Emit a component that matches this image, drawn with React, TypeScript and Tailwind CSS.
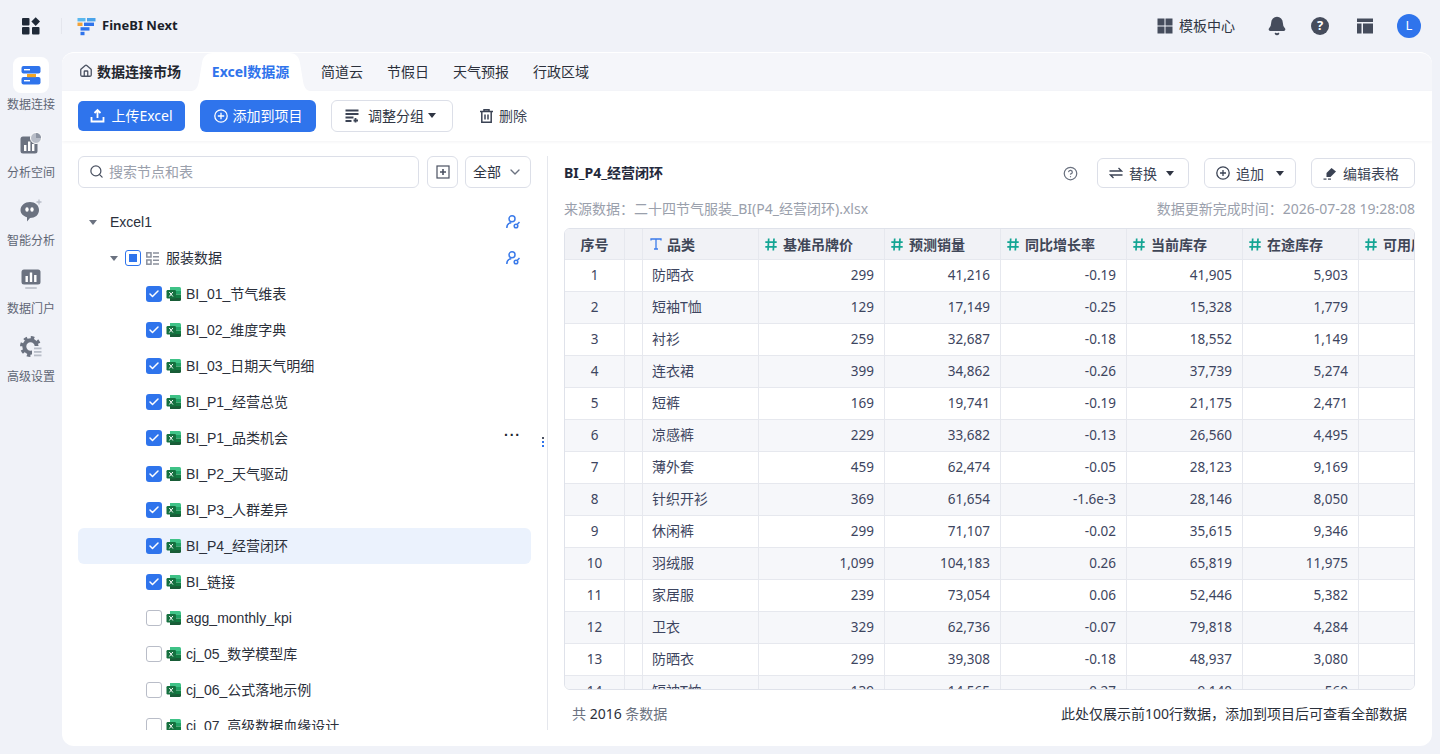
import { Bell, Check, ChevronDown, CircleHelp, House, Search } from "lucide-react";

const FONT = "font-['Noto_Sans','Noto_Sans_CJK_SC',sans-serif]";
const TREE_FONT = "font-['Liberation_Sans','Noto_Sans_CJK_SC',sans-serif]";

const TABS = ["简道云", "节假日", "天气预报", "行政区域"];

const TABLES = [
  { name: "BI_01_节气维表", checked: true },
  { name: "BI_02_维度字典", checked: true },
  { name: "BI_03_日期天气明细", checked: true },
  { name: "BI_P1_经营总览", checked: true },
  { name: "BI_P1_品类机会", checked: true, more: true },
  { name: "BI_P2_天气驱动", checked: true },
  { name: "BI_P3_人群差异", checked: true },
  { name: "BI_P4_经营闭环", checked: true, active: true },
  { name: "BI_链接", checked: true },
  { name: "agg_monthly_kpi", checked: false },
  { name: "cj_05_数学模型库", checked: false },
  { name: "cj_06_公式落地示例", checked: false },
  { name: "cj_07_高级数据血缘设计", checked: false },
];

const ROWS = [
  ["1", "防晒衣", "299", "41,216", "-0.19", "41,905", "5,903"],
  ["2", "短袖T恤", "129", "17,149", "-0.25", "15,328", "1,779"],
  ["3", "衬衫", "259", "32,687", "-0.18", "18,552", "1,149"],
  ["4", "连衣裙", "399", "34,862", "-0.26", "37,739", "5,274"],
  ["5", "短裤", "169", "19,741", "-0.19", "21,175", "2,471"],
  ["6", "凉感裤", "229", "33,682", "-0.13", "26,560", "4,495"],
  ["7", "薄外套", "459", "62,474", "-0.05", "28,123", "9,169"],
  ["8", "针织开衫", "369", "61,654", "-1.6e-3", "28,146", "8,050"],
  ["9", "休闲裤", "299", "71,107", "-0.02", "35,615", "9,346"],
  ["10", "羽绒服", "1,099", "104,183", "0.26", "65,819", "11,975"],
  ["11", "家居服", "239", "73,054", "0.06", "52,446", "5,382"],
  ["12", "卫衣", "329", "62,736", "-0.07", "79,818", "4,284"],
  ["13", "防晒衣", "299", "39,308", "-0.18", "48,937", "3,080"],
  ["14", "短袖T恤", "139", "14,565", "-0.27", "9,140", "560"],
];

const NUM_HEADERS = [
  { label: "基准吊牌价", w: "w-[126px]" },
  { label: "预测销量", w: "w-[116px]" },
  { label: "同比增长率", w: "w-[126px]" },
  { label: "当前库存", w: "w-[116px]" },
  { label: "在途库存", w: "w-[116px]" },
];

function AppsIcon() {
  return (
    <svg width="18" height="18" viewBox="0 0 18 18" fill="#1f2937">
      <rect x="0" y="1" width="7.5" height="7.5" rx="1" />
      <rect x="0" y="10" width="7.5" height="7.5" rx="1" />
      <rect x="10" y="10" width="7.5" height="7.5" rx="1" />
      <path d="M13.7 0.3 18 4.6l-4.3 4.3-4.3-4.3z" />
    </svg>
  );
}

function Logo() {
  return (
    <svg width="19" height="19" viewBox="0 0 19 19">
      <rect x="0.5" y="1" width="8" height="3.4" fill="#5bb8ee" />
      <rect x="10" y="1" width="8.5" height="3.4" fill="#4aa3ea" />
      <rect x="0.5" y="5.6" width="5" height="3.4" fill="#f2a33a" />
      <rect x="7" y="5.6" width="10" height="3.4" fill="#2f74ec" />
      <rect x="3.5" y="10.2" width="9" height="3.4" fill="#2f74ec" />
      <rect x="3.5" y="14.8" width="4" height="3.4" fill="#2f74ec" />
    </svg>
  );
}

function ConnectIcon() {
  return (
    <svg width="20" height="20" viewBox="0 0 20 20">
      <rect x="0.5" y="1" width="19" height="7.5" rx="2" fill="#2f74ec" />
      <rect x="0.5" y="12" width="19" height="7.5" rx="2" fill="#2f74ec" />
      <rect x="3" y="4" width="6" height="1.4" fill="#fff" />
      <rect x="3" y="15" width="6" height="1.4" fill="#fff" />
      <path d="M6 9h9v3.2H6z" fill="#f5a623" />
    </svg>
  );
}

function SpaceIcon() {
  return (
    <svg width="22" height="22" viewBox="0 0 22 22">
      <rect x="0.5" y="4.5" width="17" height="17" rx="2.5" fill="#6b7280" />
      <rect x="4" y="13" width="2.4" height="6" fill="#fff" />
      <rect x="8" y="9.5" width="2.4" height="9.5" fill="#fff" />
      <rect x="12" y="12" width="2.4" height="7" fill="#fff" />
      <circle cx="16" cy="6" r="5.5" fill="#b8bdc8" stroke="#fff" />
      <path d="M16 6V1a5 5 0 0 1 5 5z" fill="#8d94a2" />
    </svg>
  );
}

function ChatIcon() {
  return (
    <svg width="24" height="24" viewBox="0 0 24 24">
      <path d="M11 3c5 0 9 3 9 8s-4 8-9 8l-3 3.5v-4.2C4 17 1.5 14.5 1.5 11 1.5 6.5 6 3 11 3z" fill="#6b7280" />
      <ellipse cx="8" cy="10.5" rx="1.7" ry="2.3" fill="#fff" />
      <ellipse cx="13" cy="10.5" rx="1.7" ry="2.3" fill="#fff" />
      <path d="M20 0.5v5M17.5 3h5" stroke="#b8bdc8" strokeWidth="1.3" />
    </svg>
  );
}

function PortalIcon() {
  return (
    <svg width="20" height="21" viewBox="0 0 20 21">
      <rect x="0.5" y="0.5" width="19" height="15" rx="2.5" fill="#6b7280" />
      <rect x="4.5" y="7" width="2.4" height="6" fill="#fff" />
      <rect x="8.8" y="3.5" width="2.4" height="9.5" fill="#fff" />
      <rect x="13.1" y="6" width="2.4" height="7" fill="#fff" />
      <rect x="4" y="18" width="12" height="2" rx="1" fill="#c3c7d0" />
    </svg>
  );
}

function GearIcon() {
  return (
    <svg width="22" height="22" viewBox="0 0 22 22" fill="none">
      <circle cx="10.5" cy="10.5" r="6.2" stroke="#6b7280" strokeWidth="4" />
      <circle cx="10.5" cy="10.5" r="9" stroke="#6b7280" strokeWidth="3" strokeDasharray="3.5 3.57" />
      <rect x="12" y="10" width="10" height="12" fill="#f0f2f8" />
      <rect x="14" y="11.5" width="7.5" height="1.8" fill="#b8bdc8" />
      <rect x="14" y="15" width="7.5" height="1.8" fill="#b8bdc8" />
      <rect x="14" y="18.5" width="7.5" height="1.8" fill="#b8bdc8" />
    </svg>
  );
}

function ExcelIcon() {
  return (
    <svg width="16" height="16" viewBox="0 0 16 16" className="shrink-0">
      <path d="M4 1h9.5A1.5 1.5 0 0 1 15 2.5V5H4z" fill="#3fc287" />
      <rect x="4" y="5" width="11" height="3.5" fill="#21a366" />
      <rect x="4" y="8.5" width="11" height="3.5" fill="#107c41" />
      <path d="M4 12h11v1.5a1.5 1.5 0 0 1-1.5 1.5H4z" fill="#185c37" />
      <rect x="0.5" y="4" width="9.5" height="8.5" rx="1.2" fill="#15703f" />
      <path d="M3.3 6l3.6 4.5M6.9 6l-3.6 4.5" stroke="#fff" strokeWidth="1" />
    </svg>
  );
}

function HashIcon() {
  return (
    <svg width="12" height="13" viewBox="0 0 12 13" className="shrink-0" fill="none" stroke="#14a594" strokeWidth="1.7">
      <path d="M3.7 0.5 3 12.5M9 0.5l-.7 12M0.3 4.2h11.400M0.3 8.800h11.400" />
    </svg>
  );
}

function TextTypeIcon() {
  return (
    <svg width="12" height="12" viewBox="0 0 12 12" className="shrink-0" fill="none" stroke="#3b7bea" strokeWidth="1.3">
      <path d="M1 2.5V1h10v1.5M6 1v10M4 11h4" />
    </svg>
  );
}

function ShareIcon() {
  return (
    <svg width="14" height="14" viewBox="0 0 14 14" fill="none" stroke="#3b7bea" strokeWidth="1.5">
      <circle cx="6" cy="3.8" r="3" />
      <path d="M0.8 13c0-3 2-5 4.500-5.200" />
      <circle cx="10" cy="11" r="1.8" />
      <path d="M11.200 9.600 13.500 7" />
    </svg>
  );
}

function Caret({ className }: { className: string }) {
  return (
    <span className={`inline-block w-0 h-0 border-x-[4.5px] border-x-transparent border-t-[5px] ${className}`} />
  );
}

function NavItem({ icon, label, active }: { icon: React.ReactNode; label: string; active?: boolean }) {
  return (
    <div className="h-[68px] flex flex-col items-center">
      <div className={`w-9 h-9 rounded-lg flex items-center justify-center ${active ? "bg-white" : ""}`}>{icon}</div>
      <span className="mt-[2px] text-xs leading-5 text-[#5f6675]">{label}</span>
    </div>
  );
}

function Checkbox({ checked }: { checked: boolean }) {
  if (checked) {
    return (
      <span className="w-4 h-4 shrink-0 rounded-[3px] bg-[#2f74ec] flex items-center justify-center">
        <Check size={12} strokeWidth={3} color="#fff" />
      </span>
    );
  }
  return <span className="w-4 h-4 shrink-0 rounded-[3px] border border-[#b9bdc8] bg-white" />;
}

function OutlineButton({ children, className }: { children: React.ReactNode; className: string }) {
  return (
    <button className={`h-[30px] rounded-md border border-[#dcdfe8] bg-white flex items-center pl-[11px] gap-[6px] text-[14px] text-[#3b4354] ${className}`}>
      {children}
    </button>
  );
}

export default function App() {
  return (
    <div className={`h-screen w-full overflow-hidden bg-[#f0f2f8] flex flex-col ${FONT}`}>
      <header className="h-[52px] shrink-0 flex items-center pl-[22px] pr-[19px]">
        <AppsIcon />
        <div className="ml-[21px] w-px h-4 bg-[#e4e6ed]" />
        <div className="ml-[15px]">
          <Logo />
        </div>
        <span className="ml-[6px] text-[13px] font-bold text-[#1b1f2a]">FineBI Next</span>
        <div className="ml-auto flex items-center">
          <svg width="16" height="16" viewBox="0 0 16 16" fill="#454c5c">
            <rect x="0.5" y="0.5" width="7" height="7" />
            <rect x="8.5" y="0.5" width="7" height="7" />
            <rect x="0.5" y="8.5" width="7" height="7" />
            <rect x="8.5" y="8.5" width="7" height="7" />
          </svg>
          <span className="ml-[6px] pb-[2px] text-[14px] text-[#2f3543]">模板中心</span>
          <Bell size={20} fill="#454c5c" color="#454c5c" className="ml-[32px]" />
          <span className="ml-[24px] w-[18px] h-[18px] rounded-full bg-[#454c5c] text-white text-[13px] font-bold flex items-center justify-center">?</span>
          <svg width="16" height="16" viewBox="0 0 16 16" fill="#454c5c" className="ml-[28px]">
            <rect x="0" y="0.5" width="16" height="3.5" />
            <rect x="0" y="5.5" width="4.5" height="10" />
            <rect x="6" y="5.5" width="10" height="10" />
          </svg>
          <span className="ml-[24px] w-6 h-6 rounded-full bg-[#2f74ec] text-white text-[13px] flex items-center justify-center">L</span>
        </div>
      </header>

      <div className="flex-1 min-h-0 flex">
        <nav className="w-[62px] shrink-0 pt-[5px]">
          <NavItem icon={<ConnectIcon />} label="数据连接" active />
          <NavItem icon={<SpaceIcon />} label="分析空间" />
          <NavItem icon={<ChatIcon />} label="智能分析" />
          <NavItem icon={<PortalIcon />} label="数据门户" />
          <NavItem icon={<GearIcon />} label="高级设置" />
        </nav>

        <main className="w-[1370px] h-[694px] rounded-xl overflow-hidden bg-white border-t border-t-white flex flex-col">
          <div className="h-[38px] shrink-0 bg-[#f5f6fa] flex items-end text-[14px]">
            <div className="h-full ml-[17px] pb-[2px] flex items-center gap-[4px] font-bold text-[#23272f]">
              <House size={14} strokeWidth={2.2} color="#4b5262" />
              <span>数据连接市场</span>
            </div>
            <div className="h-full w-[120px] ml-[10px] pb-[2px] pr-px bg-white flex items-center justify-center font-bold text-[#2f74ec] [clip-path:path('M0_38C5_38_7_34_8_28L11_10C12_3_16_0_22_0H98C104_0_108_3_109_10L112_28C113_34_115_38_120_38Z')]">Excel数据源</div>
            <div className="h-full pb-[2px] flex items-center gap-6 ml-[10px] text-[#2b303b]">
              {TABS.map((t) => (
                <span key={t}>{t}</span>
              ))}
            </div>
          </div>

          <div className="h-[50px] shrink-0 flex items-center pl-4 shadow-[0_1px_3px_rgba(30,40,70,0.06)]">
            <button className="h-[30px] w-[107px] pb-px rounded-[5px] bg-[#2f74ec] text-white text-[14px] flex items-center justify-center gap-[6px]">
              <svg width="15" height="15" viewBox="0 0 15 15" fill="none" stroke="#fff" strokeWidth="1.8">
                <path d="M7.5 10V2M4.5 5l3-3 3 3" />
                <path d="M1.5 9v4.5h12V9" />
              </svg>
              上传Excel
            </button>
            <button className="ml-[15px] h-8 w-[116px] pb-px rounded-md bg-[#2f74ec] text-white text-[14px] flex items-center justify-center gap-[5px]">
              <svg width="14" height="14" viewBox="0 0 14 14" fill="none" stroke="#fff" strokeWidth="1.3">
                <circle cx="7" cy="7" r="6.2" />
                <path d="M7 3.8v6.4M3.8 7h6.4" />
              </svg>
              添加到项目
            </button>
            <button className="ml-[15px] h-8 w-[122px] pl-[13px] pb-px rounded-md border border-[#dcdfe8] text-[14px] text-[#2f3543] flex items-center">
              <svg width="14" height="14" viewBox="0 0 14 14" fill="none" stroke="#3b4354" strokeWidth="1.8" className="mr-[9px]">
                <path d="M0.5 1.500h13M0.5 5h13M0.5 8.500h8M0.5 12h6M10.500 9v4.500M8.500 11.500h4.500" />
              </svg>
              调整分组
              <Caret className="ml-[4px] border-t-[#2f3543]" />
            </button>
            <button className="ml-[27px] pb-px flex items-center gap-[6px] text-[14px] text-[#3b4354]">
              <svg width="13" height="14" viewBox="0 0 13 14" fill="none" stroke="#3b4354" strokeWidth="1.5">
                <path d="M0 2.500h13M4 2.500V.8h5v1.700M1.800 2.500v10.700h9.400V2.500M5 5.500v5M8 5.500v5" />
              </svg>
              删除
            </button>
          </div>

          <div className="flex-1 min-h-0 flex pt-[15px] pb-4">
            <section className="w-[486px] shrink-0 px-4 border-r border-[#e5e7ed] relative flex flex-col">
              <div className="flex items-center h-8 shrink-0">
                <div className="w-[341px] h-8 pb-px rounded-md border border-[#dcdfe8] flex items-center pl-[10px] gap-[5px] text-[14px] text-[#9aa0ac]">
                  <Search size={15} color="#4b5262" />
                  <span>搜索节点和表</span>
                </div>
                <button className="ml-2 w-[31px] h-8 rounded-md border border-[#dcdfe8] flex items-center justify-center">
                  <svg width="14" height="14" viewBox="0 0 14 14" fill="none" stroke="#4b5262" strokeWidth="1.2">
                    <rect x="1" y="1" width="12" height="12" />
                    <path d="M7 4v6M4 7h6" strokeWidth="1.6" />
                  </svg>
                </button>
                <button className="ml-[7px] w-[66px] h-8 pb-px rounded-md border border-[#dcdfe8] flex items-center justify-center gap-[6px] text-[14px] text-[#2f3543]">
                  全部
                  <ChevronDown size={16} color="#6b7280" />
                </button>
              </div>

              <div className={`mt-4 flex-1 min-h-0 overflow-hidden text-[14px] text-[#2b303b] ${TREE_FONT}`}>
                <div className="h-9 flex items-center pl-[11px] pr-[11px]">
                  <Caret className="border-t-[#6b7280]" />
                  <span className="ml-[13px]">Excel1</span>
                  <span className="ml-auto">
                    <ShareIcon />
                  </span>
                </div>
                <div className="h-9 flex items-center pl-[32px] pr-[11px]">
                  <Caret className="border-t-[#6b7280]" />
                  <span className="ml-[7px] w-4 h-4 rounded-[3px] border border-[#2f74ec] flex items-center justify-center">
                    <span className="w-2 h-2 bg-[#2f74ec]" />
                  </span>
                  <svg width="13" height="13" viewBox="0 0 13 13" fill="none" stroke="#8b909c" strokeWidth="1.5" className="ml-[5px]">
                    <rect x="0.8" y="0.8" width="4.2" height="4.2" />
                    <rect x="0.8" y="8" width="4.2" height="4.2" />
                    <path d="M7 1h6M7 4.700h6M7 8.300h6M7 12h6" />
                  </svg>
                  <span className="ml-[7px]">服装数据</span>
                  <span className="ml-auto">
                    <ShareIcon />
                  </span>
                </div>
                {TABLES.map((t) => (
                  <div
                    key={t.name}
                    className={`h-9 flex items-center pl-[68px] pr-[10px] gap-[4px] rounded-md ${t.active ? "bg-[#ebf2fd]" : ""}`}
                  >
                    <Checkbox checked={t.checked} />
                    <ExcelIcon />
                    <span>{t.name}</span>
                    {t.more && <span className="ml-auto text-[#23272f] font-bold leading-none tracking-[1px] -translate-y-[3px]">···</span>}
                  </div>
                ))}
              </div>
              <span className="absolute right-[3px] top-[281px] flex flex-col gap-[2px]">
                <span className="w-[2px] h-[2px] bg-[#4b5262]" />
                <span className="w-[2px] h-[2px] bg-[#2f74ec]" />
                <span className="w-[2px] h-[2px] bg-[#2f74ec]" />
              </span>
            </section>

            <section className="flex-1 min-w-0 pl-4 pr-[17px] flex flex-col">
              <div className="mt-[2px] h-[30px] shrink-0 flex items-center">
                <span className="pb-[2px] text-[14px] font-bold text-[#23283a]">BI_P4_经营闭环</span>
                <CircleHelp size={15} color="#6b7280" className="ml-auto" />
                <OutlineButton className="ml-[19px] w-[92px]">
                  <svg width="14" height="12" viewBox="0 0 14 12" fill="none" stroke="#3b4354" strokeWidth="1.3">
                    <path d="M0.5 4h12L9.5 1M13.5 8h-12l3 3" />
                  </svg>
                  替换
                  <Caret className="ml-[3px] border-t-[#2f3543]" />
                </OutlineButton>
                <OutlineButton className="ml-[15px] w-[92px]">
                  <svg width="14" height="14" viewBox="0 0 14 14" fill="none" stroke="#3b4354" strokeWidth="1.3">
                    <circle cx="7" cy="7" r="6.2" />
                    <path d="M7 4v6M4 7h6" />
                  </svg>
                  追加
                  <Caret className="ml-[6px] border-t-[#2f3543]" />
                </OutlineButton>
                <OutlineButton className="ml-[15px] w-[104px]">
                  <svg width="14" height="13" viewBox="0 0 14 13" fill="#3b4354">
                    <path d="M8.5 1 13 4.500 7.500 10H3.500V6z" />
                    <rect x="0.5" y="11.500" width="3" height="1.200" />
                    <rect x="5" y="11.500" width="3" height="1.200" />
                  </svg>
                  编辑表格
                </OutlineButton>
              </div>

              <div className="h-[40px] shrink-0 flex items-center justify-between text-[14px] text-[#9aa0ac]">
                <span>来源数据：二十四节气服装_BI(P4_经营闭环).xlsx</span>
                <span>数据更新完成时间：2026-07-28 19:28:08</span>
              </div>

              <div className="h-[462px] shrink-0 rounded-md border border-[#dfe2ea] overflow-hidden text-[14px] text-[#3d4560]">
                <div className="w-max h-[31px] flex bg-[#f1f2f6] font-bold text-[#3f4657] border-b border-[#e6e8ee]">
                  <div className="w-[60px] border-r border-[#e6e8ee] flex items-center justify-center">序号</div>
                  <div className="w-[18px] border-r border-[#e6e8ee]" />
                  <div className="w-[116px] border-r border-[#e6e8ee] flex items-center pl-[7px] gap-[5px]">
                    <TextTypeIcon />
                    品类
                  </div>
                  {NUM_HEADERS.map((h) => (
                    <div key={h.label} className={`${h.w} border-r border-[#e6e8ee] flex items-center pl-[6px] gap-[6px]`}>
                      <HashIcon />
                      {h.label}
                    </div>
                  ))}
                  <div className="w-[116px] flex items-center pl-[6px] gap-[6px]">
                    <HashIcon />
                    可用库存
                  </div>
                </div>
                {ROWS.map((r, i) => (
                  <div key={r[0]} className={`w-max h-8 flex border-b border-[#e6e8ee] ${i % 2 === 1 ? "bg-[#f6f7fa]" : "bg-white"}`}>
                    <div className="w-[60px] border-r border-[#e6e8ee] flex items-center justify-center text-[13.5px]">{r[0]}</div>
                    <div className="w-[18px] border-r border-[#e6e8ee]" />
                    <div className="w-[116px] pb-[2px] border-r border-[#e6e8ee] flex items-center pl-[9px]">{r[1]}</div>
                    <div className="w-[126px] border-r border-[#e6e8ee] flex items-center justify-end pr-[10px] text-[13.5px]">{r[2]}</div>
                    <div className="w-[116px] border-r border-[#e6e8ee] flex items-center justify-end pr-[10px] text-[13.5px]">{r[3]}</div>
                    <div className="w-[126px] border-r border-[#e6e8ee] flex items-center justify-end pr-[10px] text-[13.5px]">{r[4]}</div>
                    <div className="w-[116px] border-r border-[#e6e8ee] flex items-center justify-end pr-[10px] text-[13.5px]">{r[5]}</div>
                    <div className="w-[116px] border-r border-[#e6e8ee] flex items-center justify-end pr-[10px] text-[13.5px]">{r[6]}</div>
                    <div className="w-[116px]" />
                  </div>
                ))}
              </div>

              <div className="flex-1 flex items-center justify-between px-2 pt-[6px] text-[14px] text-[#6b7280]">
                <span>
                  共 <span className="text-[#2b303b]">2016</span> 条数据
                </span>
                <span className="text-[#2b303b]">此处仅展示前100行数据，添加到项目后可查看全部数据</span>
              </div>
            </section>
          </div>
        </main>
      </div>
    </div>
  );
}
